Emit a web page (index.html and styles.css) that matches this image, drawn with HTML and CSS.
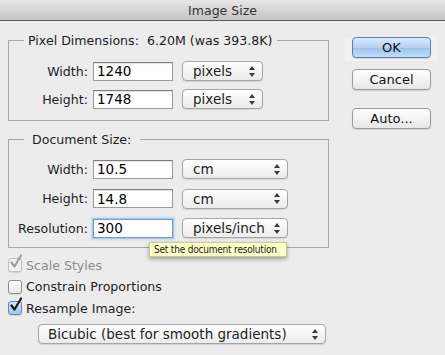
FILE: index.html
```html
<!DOCTYPE html>
<html lang="en">
<head>
    <meta charset="UTF-8">
    <title>Image Size</title>
    <link rel="stylesheet" href="styles.css">
</head>
<body>

<div class="titlebar">Image Size</div>

<div class="dialog">
    <div class="main">
        <fieldset class="group group-pixels">
            <legend>Pixel Dimensions:&nbsp; 6.20M (was 393.8K)</legend>
            <div class="row">
                <label>Width:</label>
                <input type="text" class="field" value="1240">
                <div class="popup short">pixels
                    <svg class="arrows" width="6" height="11" viewBox="0 0 6 11"><path d="M3 0L6 4H0Z M0 7H6L3 11Z"/></svg>
                </div>
            </div>
            <div class="row">
                <label>Height:</label>
                <input type="text" class="field" value="1748">
                <div class="popup short">pixels
                    <svg class="arrows" width="6" height="11" viewBox="0 0 6 11"><path d="M3 0L6 4H0Z M0 7H6L3 11Z"/></svg>
                </div>
            </div>
        </fieldset>

        <fieldset class="group group-doc">
            <legend>Document Size:</legend>
            <div class="row">
                <label>Width:</label>
                <input type="text" class="field" value="10.5">
                <div class="popup long">cm
                    <svg class="arrows" width="6" height="11" viewBox="0 0 6 11"><path d="M3 0L6 4H0Z M0 7H6L3 11Z"/></svg>
                </div>
            </div>
            <div class="row">
                <label>Height:</label>
                <input type="text" class="field" value="14.8">
                <div class="popup long">cm
                    <svg class="arrows" width="6" height="11" viewBox="0 0 6 11"><path d="M3 0L6 4H0Z M0 7H6L3 11Z"/></svg>
                </div>
            </div>
            <div class="row tip-row">
                <label>Resolution:</label>
                <input type="text" class="field focused" value="300">
                <div class="popup long">pixels/inch
                    <svg class="arrows" width="6" height="11" viewBox="0 0 6 11"><path d="M3 0L6 4H0Z M0 7H6L3 11Z"/></svg>
                </div>
                <div class="tooltip">Set the document resolution</div>
            </div>
        </fieldset>

        <div class="checks">
            <div class="check disabled">
                <span class="box checked">
                    <svg class="tick" width="14" height="16" viewBox="0 0 14 16"><path d="M2.5 8.5L5.5 12.5L12 1.5"/></svg>
                </span>
                Scale Styles
            </div>
            <div class="check">
                <span class="box"></span>
                Constrain Proportions
            </div>
            <div class="check">
                <span class="box checked on">
                    <svg class="tick" width="14" height="16" viewBox="0 0 14 16"><path d="M2.5 8.5L5.5 12.5L12 1.5"/></svg>
                </span>
                Resample Image:
            </div>
        </div>

        <div class="popup wide">Bicubic (best for smooth gradients)
            <svg class="arrows" width="6" height="11" viewBox="0 0 6 11"><path d="M3 0L6 4H0Z M0 7H6L3 11Z"/></svg>
        </div>
    </div>

    <div class="buttons">
        <div class="default-wrap">
            <button class="btn default">OK</button>
        </div>
        <button class="btn cancel">Cancel</button>
        <button class="btn auto">Auto...</button>
    </div>
</div>

</body>
</html>
```

FILE: styles.css
```css
body {
    margin: 0;
    width: 445px;
    height: 355px;
    overflow: hidden;
    background-color: #ececec;
    font-family: "DejaVu Sans", sans-serif;
    font-size: 12.6px;
    color: #1e1e1e;
}
.titlebar {
    height: 20px;
    line-height: 21px;
    text-align: center;
    font-size: 12.5px;
    color: #333;
    background: linear-gradient(to bottom, #e8e8e8, #c4c4c4);
    border-bottom: 1px solid #5c5c5c;
}
.dialog {
    display: flex;
    padding-left: 8px;
}
.main {
    width: 321px;
}
.group {
    margin: 0;
    border: 1px solid #a8a8a8;
    padding: 0 0 11px 0;
}
.group legend {
    margin-left: 15px;
    line-height: 15px;
    padding: 0 4px;
}
.group-pixels {
    margin-top: 12px;
    padding-top: 13px;
}
.group-doc {
    margin-top: 11px;
    padding-top: 12px;
    padding-bottom: 9px;
}
.group-doc legend {
    padding: 0 9px 0 8px;
}
.row {
    display: flex;
    align-items: center;
    height: 20px;
    position: relative;
}
.group-pixels .row + .row {
    margin-top: 8px;
}
.group-doc .row + .row {
    margin-top: 9.5px;
}
.row label {
    width: 79px;
    text-align: right;
    margin-right: 5px;
}
.field {
    box-sizing: border-box;
    width: 80px;
    height: 19px;
    margin: 0 9px 0 0;
    padding: 0 3px;
    border: 1px solid #9a9a9a;
    border-top-color: #7e7e7e;
    box-shadow: inset 0 1px 1px rgba(0, 0, 0, 0.12);
    background-color: white;
    font-family: "DejaVu Sans", sans-serif;
    font-size: 13.5px;
    color: black;
}
.field.focused {
    border-color: #6f9bd3;
    box-shadow: 0 0 0 1px #a9c7ec, 0 0 2px 2px #c7dbf3;
    outline: none;
}
.popup {
    box-sizing: border-box;
    height: 20px;
    display: flex;
    align-items: center;
    justify-content: space-between;
    padding: 0 7px 0 10px;
    border: 1px solid #a5a5a5;
    border-radius: 4px;
    background: linear-gradient(to bottom, #ffffff, #f3f3f3 60%, #ebebeb);
    box-shadow: 0 1px 1px rgba(0, 0, 0, 0.1);
    font-size: 13.5px;
}
.popup.short {
    width: 81px;
}
.popup.long {
    width: 106px;
}
.popup.wide {
    width: 288px;
    margin: 9px 0 0 30px;
    padding-left: 9px;
}
.arrows {
    fill: #3a3a3a;
    flex: none;
}
.tooltip {
    position: absolute;
    left: 140px;
    top: 24px;
    z-index: 2;
    box-sizing: border-box;
    width: 138px;
    height: 15px;
    line-height: 14px;
    padding-left: 4px;
    background-color: #ffffc7;
    border: 1px solid #c8c89c;
    box-shadow: 0 2px 4px rgba(0, 0, 0, 0.35);
    font-family: "DejaVu Sans Condensed", "DejaVu Sans", sans-serif;
    font-stretch: condensed;
    font-size: 10px;
    letter-spacing: -0.2px;
    color: #222;
    white-space: nowrap;
    overflow: hidden;
}
.checks {
    margin-top: 10px;
    display: flex;
    flex-direction: column;
    gap: 7.5px;
}
.check {
    display: flex;
    align-items: center;
    height: 14px;
    gap: 4px;
}
.check.disabled {
    color: #8c8c8c;
}
.box {
    position: relative;
    box-sizing: border-box;
    width: 14px;
    height: 14px;
    border: 1px solid #8a8a8a;
    border-radius: 3px;
    background: linear-gradient(to bottom, #ffffff, #e8e8e8);
    box-shadow: 0 1px 1px rgba(0, 0, 0, 0.1);
}
.box.on {
    border-color: #6584b3;
    background: linear-gradient(to bottom, #d9e8f8, #a3c3e8);
}
.check.disabled .box {
    border-color: #c0c0c0;
    background: #f1f1f1;
}
.tick {
    position: absolute;
    left: 0;
    top: -5px;
    fill: none;
    stroke: #1a1a1a;
    stroke-width: 2.2;
    stroke-linecap: round;
    stroke-linejoin: round;
}
.check.disabled .tick {
    stroke: #a0a0a0;
}
.buttons {
    display: flex;
    flex-direction: column;
    align-items: flex-start;
    margin-left: 16px;
    padding-top: 16px;
}
.default-wrap {
    padding: 0 6px 3px 7px;
    background-color: #f1f1f1;
}
.btn {
    box-sizing: border-box;
    width: 79px;
    height: 21px;
    margin: 0;
    padding: 0;
    border: 1px solid #9b9b9b;
    border-radius: 4px;
    background: linear-gradient(to bottom, #ffffff, #f2f2f2 55%, #e6e6e6);
    box-shadow: 0 1px 1px rgba(0, 0, 0, 0.12);
    font-family: "DejaVu Sans", sans-serif;
    font-size: 13px;
    color: #111;
}
.btn.cancel {
    margin: 8px 0 0 7px;
}
.btn.auto {
    margin: 18px 0 0 7px;
}
.btn.default {
    border-color: #5b7fb0;
    background: linear-gradient(to bottom, #dbeafc, #b2d1f3 50%, #98c2ee 51%, #c4ddf7);
}
```
